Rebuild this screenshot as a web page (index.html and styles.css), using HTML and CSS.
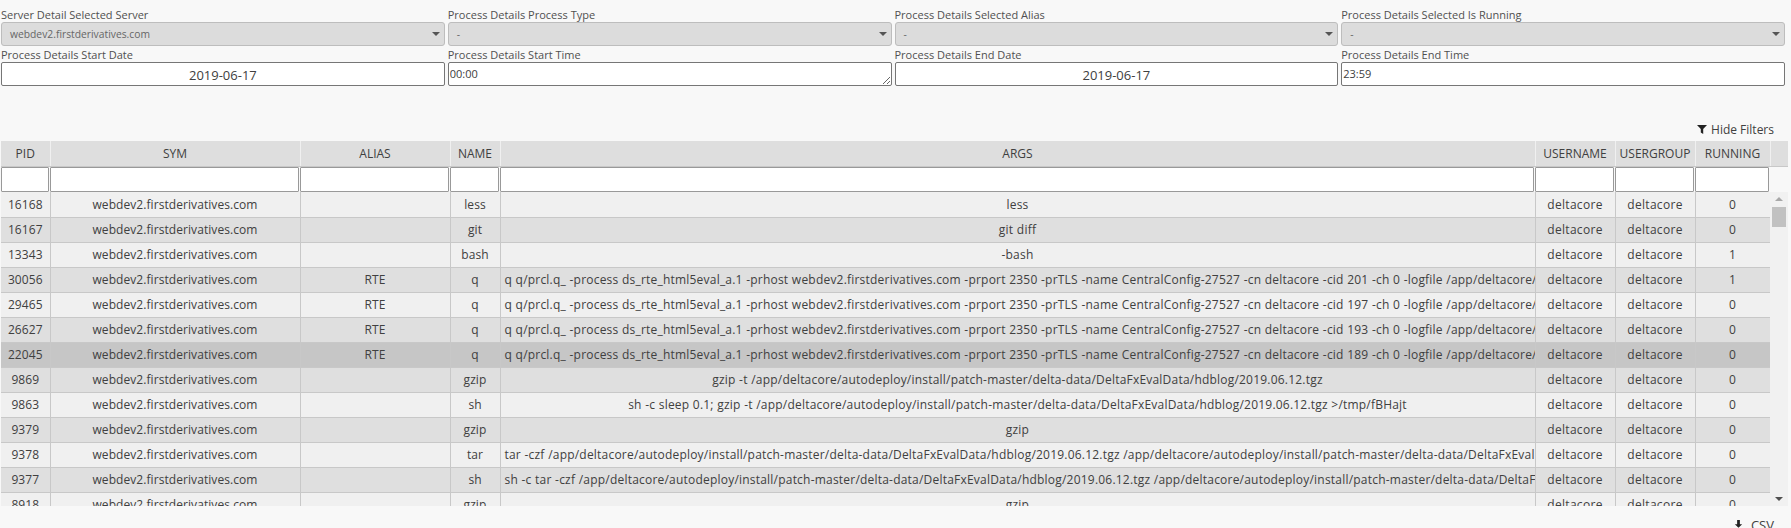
FILE: index.html
```html
<!DOCTYPE html>
<html lang="en">
<head>
<meta charset="utf-8">
<title>Process Details</title>
<link rel="stylesheet" href="styles.css">
</head>
<body>
<div class="filters">
  <div class="field"><label>Server Detail Selected Server</label><div class="select"><span>webdev2.firstderivatives.com</span><i class="caret"></i></div></div>
  <div class="field"><label>Process Details Process Type</label><div class="select"><span>-</span><i class="caret"></i></div></div>
  <div class="field"><label>Process Details Selected Alias</label><div class="select"><span>-</span><i class="caret"></i></div></div>
  <div class="field"><label>Process Details Selected Is Running</label><div class="select"><span>-</span><i class="caret"></i></div></div>
  <div class="field"><label>Process Details Start Date</label><div class="input center">2019-06-17</div></div>
  <div class="field"><label>Process Details Start Time</label><div class="input">00:00<svg class="grip" width="10" height="10" viewBox="0 0 10 10"><path d="M9 2 2 9M9 6 6 9" stroke="#666" fill="none"/></svg></div></div>
  <div class="field"><label>Process Details End Date</label><div class="input center">2019-06-17</div></div>
  <div class="field"><label>Process Details End Time</label><div class="input">23:59</div></div>
</div>
<div class="toolbar"><svg width="10" height="9" viewBox="0 0 10 9"><path d="M0 0h10L6.200 4V9L3.800 7.500V4z" fill="#222"/></svg><span>Hide Filters</span></div>
<div class="grid">
  <table class="head">
    <colgroup><col class="c1"><col class="c2"><col class="c3"><col class="c4"><col class="c5"><col class="c6"><col class="c7"><col class="c8"><col></colgroup>
    <tr class="titles"><th>PID</th><th>SYM</th><th>ALIAS</th><th>NAME</th><th>ARGS</th><th>USERNAME</th><th>USERGROUP</th><th>RUNNING</th><th></th></tr>
    <tr class="search"><td><div></div></td><td><div></div></td><td><div></div></td><td><div></div></td><td><div></div></td><td><div></div></td><td><div></div></td><td><div></div></td><td></td></tr>
  </table>
  <div class="body">
    <div class="viewport">
      <table class="rows">
        <colgroup><col class="c1"><col class="c2"><col class="c3"><col class="c4"><col class="c5"><col class="c6"><col class="c7"><col class="c8"></colgroup>
        <tr><td>16168</td><td>webdev2.firstderivatives.com</td><td></td><td>less</td><td>less</td><td>deltacore</td><td>deltacore</td><td>0</td></tr>
        <tr><td>16167</td><td>webdev2.firstderivatives.com</td><td></td><td>git</td><td>git diff</td><td>deltacore</td><td>deltacore</td><td>0</td></tr>
        <tr><td>13343</td><td>webdev2.firstderivatives.com</td><td></td><td>bash</td><td>-bash</td><td>deltacore</td><td>deltacore</td><td>1</td></tr>
        <tr><td>30056</td><td>webdev2.firstderivatives.com</td><td>RTE</td><td>q</td><td>q q/prcl.q_ -process ds_rte_html5eval_a.1 -prhost webdev2.firstderivatives.com -prport 2350 -prTLS -name CentralConfig-27527 -cn deltacore -cid 201 -ch 0 -logfile /app/deltacore/logs/ds_rte_html5eval_a.1.log</td><td>deltacore</td><td>deltacore</td><td>1</td></tr>
        <tr><td>29465</td><td>webdev2.firstderivatives.com</td><td>RTE</td><td>q</td><td>q q/prcl.q_ -process ds_rte_html5eval_a.1 -prhost webdev2.firstderivatives.com -prport 2350 -prTLS -name CentralConfig-27527 -cn deltacore -cid 197 -ch 0 -logfile /app/deltacore/logs/ds_rte_html5eval_a.1.log</td><td>deltacore</td><td>deltacore</td><td>0</td></tr>
        <tr><td>26627</td><td>webdev2.firstderivatives.com</td><td>RTE</td><td>q</td><td>q q/prcl.q_ -process ds_rte_html5eval_a.1 -prhost webdev2.firstderivatives.com -prport 2350 -prTLS -name CentralConfig-27527 -cn deltacore -cid 193 -ch 0 -logfile /app/deltacore/logs/ds_rte_html5eval_a.1.log</td><td>deltacore</td><td>deltacore</td><td>0</td></tr>
        <tr class="selected"><td>22045</td><td>webdev2.firstderivatives.com</td><td>RTE</td><td>q</td><td>q q/prcl.q_ -process ds_rte_html5eval_a.1 -prhost webdev2.firstderivatives.com -prport 2350 -prTLS -name CentralConfig-27527 -cn deltacore -cid 189 -ch 0 -logfile /app/deltacore/logs/ds_rte_html5eval_a.1.log</td><td>deltacore</td><td>deltacore</td><td>0</td></tr>
        <tr><td>9869</td><td>webdev2.firstderivatives.com</td><td></td><td>gzip</td><td>gzip -t /app/deltacore/autodeploy/install/patch-master/delta-data/DeltaFxEvalData/hdblog/2019.06.12.tgz</td><td>deltacore</td><td>deltacore</td><td>0</td></tr>
        <tr><td>9863</td><td>webdev2.firstderivatives.com</td><td></td><td>sh</td><td>sh -c sleep 0.1; gzip -t /app/deltacore/autodeploy/install/patch-master/delta-data/DeltaFxEvalData/hdblog/2019.06.12.tgz &gt;/tmp/fBHajt</td><td>deltacore</td><td>deltacore</td><td>0</td></tr>
        <tr><td>9379</td><td>webdev2.firstderivatives.com</td><td></td><td>gzip</td><td>gzip</td><td>deltacore</td><td>deltacore</td><td>0</td></tr>
        <tr><td>9378</td><td>webdev2.firstderivatives.com</td><td></td><td>tar</td><td>tar -czf /app/deltacore/autodeploy/install/patch-master/delta-data/DeltaFxEvalData/hdblog/2019.06.12.tgz /app/deltacore/autodeploy/install/patch-master/delta-data/DeltaFxEvalData/hdblog/2019.06.12</td><td>deltacore</td><td>deltacore</td><td>0</td></tr>
        <tr><td>9377</td><td>webdev2.firstderivatives.com</td><td></td><td>sh</td><td>sh -c tar -czf /app/deltacore/autodeploy/install/patch-master/delta-data/DeltaFxEvalData/hdblog/2019.06.12.tgz /app/deltacore/autodeploy/install/patch-master/delta-data/DeltaFxEvalData/hdblog/2019.06.12</td><td>deltacore</td><td>deltacore</td><td>0</td></tr>
        <tr><td>8918</td><td>webdev2.firstderivatives.com</td><td></td><td>gzip</td><td>gzip</td><td>deltacore</td><td>deltacore</td><td>0</td></tr>
      </table>
    </div>
    <div class="scrollbar">
      <i class="arrow up"></i>
      <div class="track"><div class="thumb"></div></div>
      <i class="arrow down"></i>
    </div>
  </div>
</div>
<div class="export"><svg width="11" height="11" viewBox="0 0 12 12"><path d="M4.500 0h3v4.500H10L6 8.500 2 4.500h2.500zM0 9.500h4.500L6 10.500l1.500-1H12V12H0z" fill="#222"/></svg><span>CSV</span></div>
</body>
</html>
```
FILE: styles.css
```css
* { box-sizing: border-box; }
html, body { height: 100%; }
body {
  margin: 0;
  height: 528px;
  overflow: hidden;
  background: #f8f8f8;
  color: #404040;
  font-family: "Open Sans", "Noto Sans", sans-serif;
  font-size: 12px;
}
.filters {
  display: grid;
  grid-template-columns: repeat(4, 1fr);
  column-gap: 3px;
  width: 1784px;
  margin-left: 1px;
  padding-top: 8px;
}
.field { display: flex; flex-direction: column; min-width: 0; }
.field label {
  height: 14px;
  line-height: 14px;
  font-size: 11px;
  color: #505050;
  white-space: nowrap;
}
.select {
  height: 24px;
  display: flex;
  align-items: center;
  justify-content: space-between;
  padding: 0 4px 0 8px;
  background: #dcdcdc;
  border: 1px solid #bdbdbd;
  border-radius: 3px;
  font-size: 10.300px;
  color: #666;
}
.caret {
  width: 0;
  height: 0;
  border-left: 4px solid transparent;
  border-right: 4px solid transparent;
  border-top: 4px solid #555;
}
.field:nth-child(n+5) { margin-top: 2px; }
.input {
  position: relative;
  height: 24px;
  line-height: 22px;
  padding: 0 1px;
  background: #fff;
  border: 1px solid #767676;
  border-radius: 2px;
  color: #404040;
  font-size: 11px;
}
.input.center { text-align: center; font-size: 13px; line-height: 24px; }
.grip { position: absolute; right: 0; bottom: 0; }
.toolbar {
  display: flex;
  justify-content: flex-end;
  align-items: center;
  gap: 4px;
  height: 24px;
  margin-top: 31px;
  padding-right: 17px;
  font-size: 12px;
  color: #404040;
}
.grid { margin-left: 1px; width: 1787px; }
table {
  border-collapse: collapse;
  table-layout: fixed;
  width: 1787px;
}
.c1 { width: 49px; }
.c2 { width: 250px; }
.c3 { width: 150px; }
.c4 { width: 50px; }
.c5 { width: 1035px; }
.c6, .c7 { width: 80px; }
.c8 { width: 75px; }
.head { background: #dedede; }
.titles th {
  height: 25px;
  padding: 0;
  font-weight: 400;
  font-size: 12px;
  color: #404040;
  border-right: 1px solid #f0f0f0;
  border-bottom: 1px solid #c8c8c8;
  white-space: nowrap;
}
.titles th:last-child { border-right: 0; }
.search { background: #f8f8f8; }
.search td { height: 26px; padding: 0 1px 0 0; }
.search td div {
  height: 25px;
  background: #fff;
  border: 1px solid #999;
  border-radius: 1px;
}
.body { display: flex; height: 314px; background: #f1f1f1; }
.viewport { width: 1769px; overflow: hidden; flex: none; }
.rows { width: 1769px; }
.rows td {
  height: 25px;
  padding: 0 4px;
  text-align: center;
  white-space: nowrap;
  overflow: hidden;
  border-right: 1px solid #c8c8c8;
  border-bottom: 1px solid #c8c8c8;
  font-size: 12px;
  letter-spacing: 0.07px;
  color: #404040;
}
.rows td:nth-child(5) { letter-spacing: 0.21px; word-spacing: 0.2px; }
.rows td:nth-child(6), .rows td:nth-child(7) { letter-spacing: 0.3px; }
.rows tr:nth-child(odd) td { background: #f0f0f0; }
.rows tr:nth-child(even) td { background: #dfdfdf; }
.rows tr.selected td { background: #c6c6c6; }
.scrollbar {
  flex: 1;
  display: flex;
  flex-direction: column;
  align-items: center;
  padding: 5px 0;
}
.arrow { width: 0; height: 0; flex: none; border-left: 4px solid transparent; border-right: 4px solid transparent; }
.arrow.up { border-bottom: 4px solid #a8a8a8; }
.arrow.down { border-top: 4px solid #505050; }
.track { flex: 1; width: 100%; padding: 6px 2px; }
.thumb { height: 20px; background: #c1c1c1; }
.export {
  display: flex;
  justify-content: flex-end;
  align-items: center;
  gap: 7px;
  height: 22px;
  padding-top: 16px;
  padding-right: 17px;
  font-size: 13px;
  color: #404040;
}
```
